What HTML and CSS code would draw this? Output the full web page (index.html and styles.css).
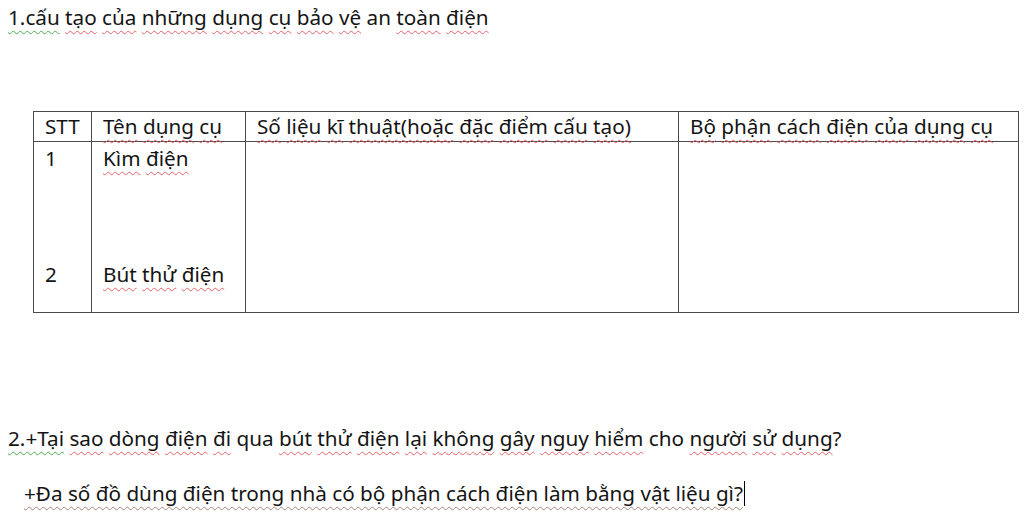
FILE: index.html
```html
<!DOCTYPE html>
<html lang="vi">
<head>
<meta charset="utf-8">
<title>Dụng cụ bảo vệ an toàn điện</title>
<link rel="stylesheet" href="styles.css">
</head>
<body>
<div class="page">
  <p class="line title"><span class="g">1.cấu</span> <span class="r">tạo</span> <span class="r">của</span> <span class="r">những</span> <span class="r">dụng</span> <span class="r">cụ</span> <span class="r">bảo</span> <span class="r">vệ</span> an <span class="r">toàn</span> <span class="r">điện</span></p>

  <table class="grid">
    <colgroup>
      <col class="c1"><col class="c2"><col class="c3"><col class="c4">
    </colgroup>
    <thead>
      <tr>
        <th>STT</th>
        <th><span class="r">Tên</span> <span class="r">dụng</span> <span class="r">cụ</span></th>
        <th><span class="r">Số</span> <span class="r">liệu</span> <span class="r">kĩ</span> <span class="r">thuật(hoặc</span> <span class="r">đặc</span> <span class="r">điểm</span> <span class="r">cấu</span> <span class="r">tạo)</span></th>
        <th><span class="r">Bộ</span> <span class="r">phận</span> <span class="r">cách</span> <span class="r">điện</span> <span class="r">của</span> <span class="r">dụng</span> <span class="r">cụ</span></th>
      </tr>
    </thead>
    <tbody>
      <tr>
        <td><div class="cellstack"><span>1</span><span>2</span></div></td>
        <td><div class="cellstack"><span><span class="r">Kìm</span> <span class="r">điện</span></span><span><span class="r">Bút</span> <span class="r">thử</span> <span class="r">điện</span></span></div></td>
        <td></td>
        <td></td>
      </tr>
    </tbody>
  </table>

  <p class="line q1"><span class="g">2.+Tại</span> <span class="r">sao</span> <span class="r">dòng</span> <span class="r">điện</span> <span class="r">đi</span> qua <span class="r">bút</span> <span class="r">thử</span> <span class="r">điện</span> <span class="r">lại</span> <span class="r">không</span> <span class="r">gây</span> <span class="r">nguy</span> <span class="r">hiểm</span> cho <span class="r">người</span> <span class="r">sử</span> <span class="r">dụng</span>?</p>
  <p class="line q2"><span class="gl">+Đa số đồ dùng điện trong nhà có bộ phận cách điện làm bằng vật liệu gì?</span><span class="caret"></span></p>
</div>
</body>
</html>
```

FILE: styles.css
```css
* { box-sizing: border-box; }
html, body { margin: 0; padding: 0; background: #ffffff; }
body {
  font-family: "Noto Sans", "Open Sans", "DejaVu Sans", sans-serif;
  font-size: 20.7px;
  color: #141414;
  width: 1024px;
  height: 527px;
  overflow: hidden;
}
.page { padding: 3px 0 0 8px; }
.line { margin: 0; line-height: 29px; white-space: nowrap; }
.r, .g, .gl {
  text-decoration-line: underline;
  text-decoration-style: wavy;
  text-decoration-thickness: 1px;
  text-underline-offset: 5px;
  text-decoration-skip-ink: none;
}
.r { text-decoration-color: #e8616b; }
.g { text-decoration-color: #4caf50; }
.gl { text-decoration-color: #a9897a; }

.grid {
  margin: 79px 0 0 25px;
  border-collapse: collapse;
  table-layout: fixed;
  width: 985px;
}
.c1 { width: 58px; }
.c2 { width: 154px; }
.c3 { width: 433px; }
.c4 { width: 340px; }
.grid th, .grid td {
  border: 1.5px solid #4a4a4a;
  text-align: left;
  vertical-align: top;
  padding: 0 0 0 11px;
  font-weight: normal;
  white-space: nowrap;
}
.grid th { height: 30px; line-height: 29px; }
.grid td { height: 171px; line-height: 29px; padding-top: 2px; }
.cellstack {
  display: flex;
  flex-direction: column;
  justify-content: space-between;
  height: 145px;
}
.q1 { margin-top: 111px; }
.q2 { margin-top: 26px; padding-left: 16px; display: flex; align-items: center; }
.caret {
  display: inline-block;
  width: 1.5px;
  height: 25px;
  background: #000;
  margin-left: 1px;
}
```
